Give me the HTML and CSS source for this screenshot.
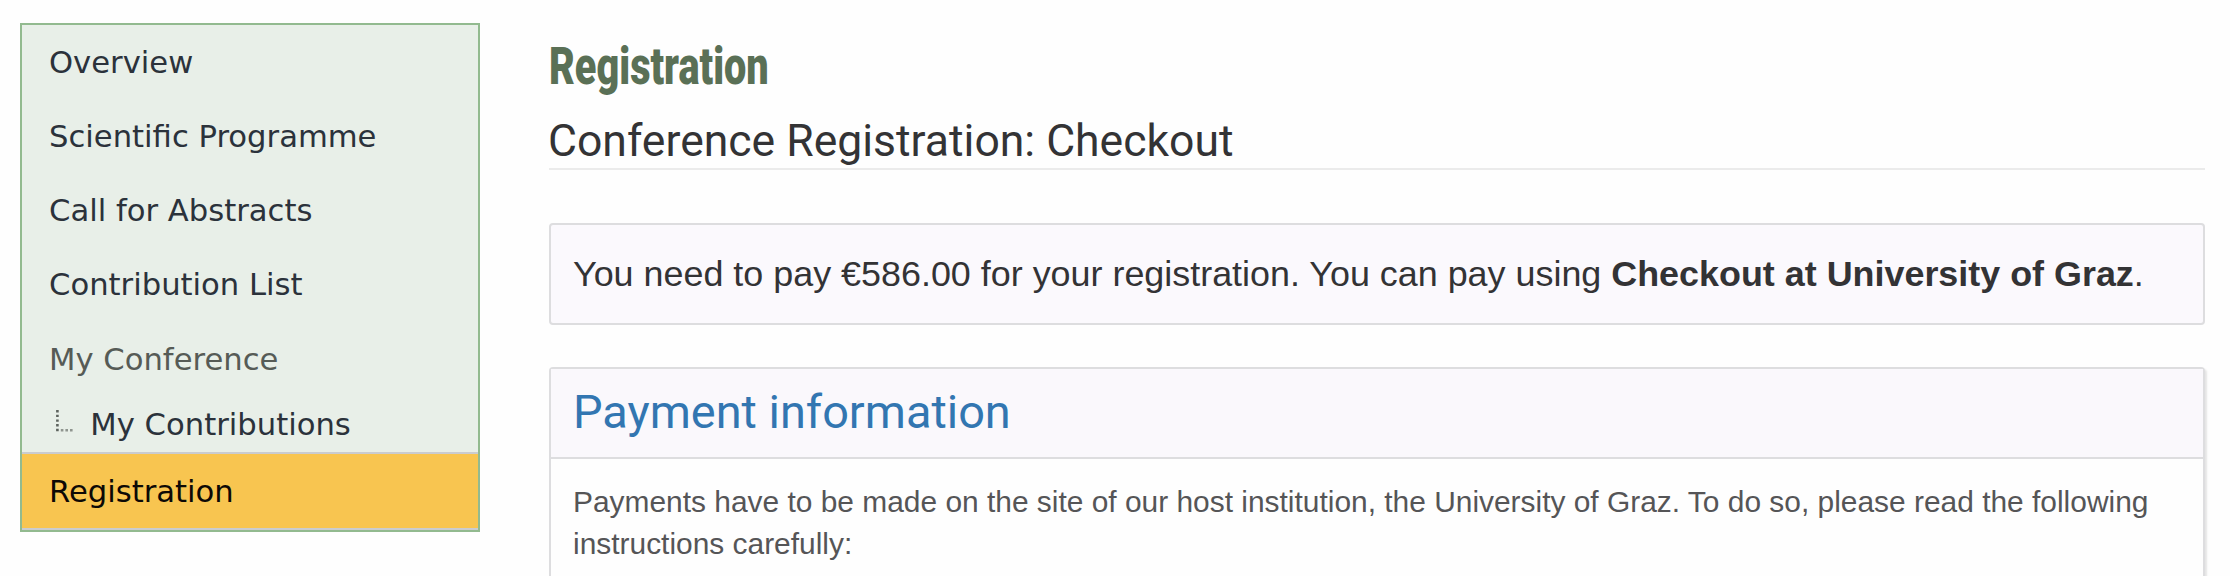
FILE: index.html
```
<!DOCTYPE html>
<html lang="en">
<head>
    <meta charset="UTF-8">
    <meta name="viewport" content="width=device-width, initial-scale=1.0">
    <title>Registration</title>
    <link rel="stylesheet" href="styles.css">
</head>
<body>
    <div class="page">
        <nav class="menu">
            <a class="menu-item" href="#">Overview</a>
            <a class="menu-item" href="#">Scientific Programme</a>
            <a class="menu-item" href="#">Call for Abstracts</a>
            <a class="menu-item" href="#">Contribution List</a>
            <span class="menu-item muted">My Conference</span>
            <a class="menu-item sub" href="#">
                <svg class="branch" width="18" height="22" viewBox="0 0 18 22">
                    <path d="M1.4 0V22" stroke="#5d635e" stroke-width="2.6" stroke-dasharray="2.4 2.3"/>
                    <path d="M4.8 20.2H17" stroke="#8f958f" stroke-width="2.6" stroke-dasharray="2.6 2"/>
                </svg>
                My Contributions
            </a>
            <a class="menu-item active" href="#">Registration</a>
        </nav>

        <main class="content">
            <h1 class="title"><span class="title-text">Registration</span></h1>
            <h2 class="subtitle">Conference Registration: Checkout</h2>
            <div class="notice">You need to pay €586.00 for your registration. You can pay using <strong>Checkout at University of Graz</strong>.</div>
            <section class="panel">
                <h3 class="panel-title">Payment information</h3>
                <p class="panel-body">Payments have to be made on the site of our host institution, the University of Graz. To do so, please read the following instructions carefully:</p>
            </section>
        </main>
    </div>
</body>
</html>
```
FILE: styles.css
```
* {
    box-sizing: border-box;
}
body {
    margin: 0;
    background-color: #fefefe;
    font-family: "Liberation Sans", Arial, sans-serif;
}
.page {
    display: flex;
    align-items: flex-start;
    gap: 69px;
    height: 576px;
    overflow: hidden;
    padding: 23px 25px 0 20px;
}
.menu {
    flex: none;
    width: 460px;
    background-color: #e8efe8;
    border: 2px solid #92ba8f;
    font-family: "DejaVu Sans", Verdana, sans-serif;
    font-size: 30.65px;
}
.menu-item {
    display: flex;
    align-items: center;
    height: 74.25px;
    padding-left: 27px;
    color: #2b323b;
    text-decoration: none;
}
.menu-item.muted {
    color: #565b56;
}
.menu-item.sub {
    height: 55.75px;
    padding-left: 34px;
}
.branch {
    margin: 0 16.3px 7px 0;
    fill: none;
}
.menu-item.active {
    height: 78px;
    background-color: #f8c550;
    border-top: 2px solid #cacccf;
    border-bottom: 2px solid #cacccf;
    color: #0d0905;
}
.content {
    flex: 1;
    min-width: 0;
}
.title {
    margin: 0;
    padding-top: 14px;
    height: 87px;
    line-height: 60px;
    font-family: Roboto, sans-serif;
    font-size: 51px;
    font-weight: 900;
    color: #5a7056;
}
/* condensed heading face */
.title-text {
    display: inline-block;
    transform: scaleX(0.777);
    transform-origin: left;
}
.subtitle {
    margin: 0 0 53px;
    height: 60px;
    line-height: 62px;
    border-bottom: 2px solid #ebebeb;
    font-family: Roboto, sans-serif;
    font-size: 44.5px;
    font-weight: 400;
    text-indent: -1px;
    color: #333335;
}
.notice {
    height: 102px;
    margin-bottom: 42px;
    padding: 22px;
    line-height: 54px;
    background-color: #fbf9fd;
    border: 2px solid #dddddf;
    border-radius: 4px;
    font-size: 35.9px;
    color: #333335;
}
.panel {
    height: 209px;
    border: 2px solid #dddddf;
    border-bottom: none;
    border-radius: 4px 4px 0 0;
    box-shadow: 2px 2px 2px rgba(0, 0, 0, 0.1);
}
.panel-title {
    margin: 0;
    height: 90px;
    padding: 0 22px;
    line-height: 86px;
    background-color: #faf8fc;
    border-bottom: 2px solid #dddddf;
    font-family: Roboto, sans-serif;
    font-size: 46.9px;
    font-weight: 400;
    color: #3276b1;
}
.panel-body {
    margin: 0;
    padding: 22px 22px 0;
    line-height: 42px;
    font-size: 29.91px;
    color: #555557;
}
```
